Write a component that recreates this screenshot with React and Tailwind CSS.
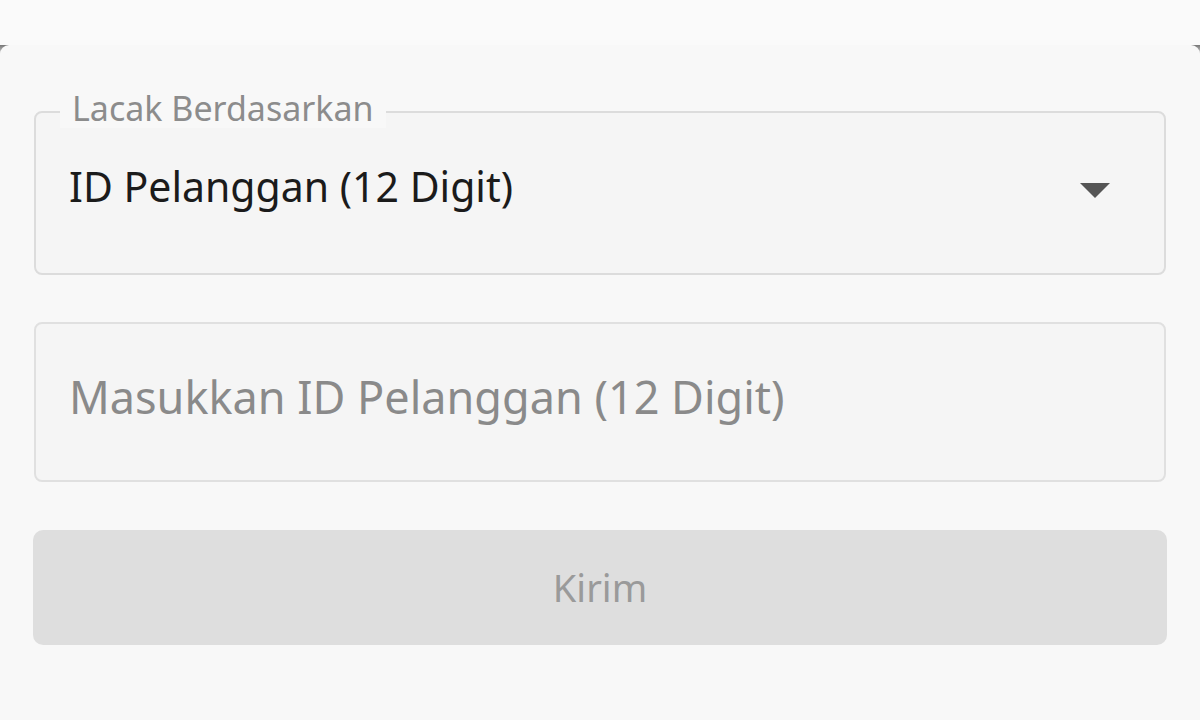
export default function App() {
  return (
    <div
      className="min-h-screen w-full bg-[#fafafa] flex flex-col"
      style={{ fontFamily: '"Noto Sans", "Open Sans", sans-serif' }}
    >
      {/* top strip behind the sheet */}
      <div className="h-[45px] bg-[#fafafa]" />
      <div className="flex-1 flex flex-col bg-gradient-to-b from-[#777] to-[#fafafa] to-[12px]">
        <div className="flex-1 flex flex-col bg-[#f8f8f8] rounded-t-[9px] px-[34px] pt-[66px]">
          {/* select field */}
          <div className="relative h-[164px] border-2 border-[#dcdcdc] rounded-[8px] bg-[#f5f5f5] flex items-center justify-between pl-[33px] pr-[54px]">
            <span className="absolute -top-[25px] left-[24px] px-[12px] bg-[#f8f8f8] text-[34px] leading-[40px] text-[#8c8c8c]">
              Lacak Berdasarkan
            </span>
            <span className="text-[41px] text-[#1b1b1b] -translate-y-[6px]">
              ID Pelanggan (12 Digit)
            </span>
            <svg width="30" height="16" viewBox="0 0 30 16" className="-translate-y-[2px]">
              <path d="M0 0 L30 0 L15 15 Z" fill="#555" />
            </svg>
          </div>

          {/* input field */}
          <div className="mt-[47px] h-[160px] border-2 border-[#e0e0e0] rounded-[8px] bg-[#f5f5f5] flex items-center pl-[33px]">
            <span className="text-[45px] text-[#8a8a8a] -translate-y-[5px]">
              Masukkan ID Pelanggan (12 Digit)
            </span>
          </div>

          {/* submit */}
          <button className="mt-[48px] -mx-px h-[115px] rounded-[10px] bg-[#dedede] flex items-center justify-center text-[38px] text-[#9a9a9a]">
            Kirim
          </button>
        </div>
      </div>
    </div>
  );
}
